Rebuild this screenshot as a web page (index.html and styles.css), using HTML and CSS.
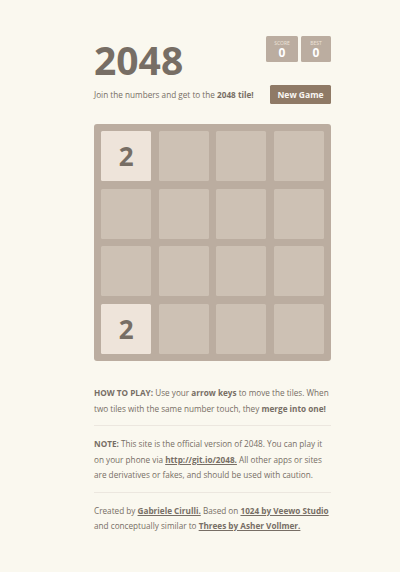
FILE: index.html
```html
<!DOCTYPE html>
<html>
<head>
<meta charset="utf-8">
<link rel="stylesheet" href="styles.css">
</head>
<body>
<div class="container">
  <div class="heading">
    <h1 class="title">2048</h1>
    <div class="scores">
      <div class="score-box"><span class="label">SCORE</span><span class="value">0</span></div>
      <div class="score-box best"><span class="label">BEST</span><span class="value">0</span></div>
    </div>
  </div>
  <div class="above-game">
    <p class="intro">Join the numbers and get to the <strong>2048 tile!</strong></p>
    <span class="restart">New Game</span>
  </div>
  <div class="board">
    <div class="cell tile-2">2</div><div class="cell"></div><div class="cell"></div><div class="cell"></div>
    <div class="cell"></div><div class="cell"></div><div class="cell"></div><div class="cell"></div>
    <div class="cell"></div><div class="cell"></div><div class="cell"></div><div class="cell"></div>
    <div class="cell tile-2">2</div><div class="cell"></div><div class="cell"></div><div class="cell"></div>
  </div>
  <p class="explanation"><strong>HOW TO PLAY:</strong> Use your <strong>arrow keys</strong> to move the tiles. When two tiles with the same number touch, they <strong>merge into one!</strong></p>
  <hr>
  <p class="note"><strong>NOTE:</strong> This site is the official version of 2048. You can play it on your phone via <a>http://git.io/2048.</a> All other apps or sites are derivatives or fakes, and should be used with caution.</p>
  <hr>
  <p class="credits">Created by <a>Gabriele Cirulli.</a> Based on <a>1024 by Veewo Studio</a> and conceptually similar to <a>Threes by Asher Vollmer.</a></p>
</div>
</body>
</html>
```
FILE: styles.css
```css
html, body {
  margin: 0;
  padding: 0;
  background: #faf8ef;
}
body {
  font-family: "Open Sans", "Noto Sans", sans-serif;
  color: #776e65;
  font-size: 8.2px;
}
.container {
  width: 237px;
  margin-left: 94px;
  padding-top: 36px;
}
.heading {
  display: flex;
  justify-content: space-between;
  align-items: flex-start;
}
.title {
  margin: 0;
  font-size: 39px;
  font-weight: 700;
  line-height: 47px;
  letter-spacing: 0;
}
.scores {
  display: flex;
  gap: 3px;
}
.score-box {
  background: #bbada0;
  width: 32px;
  height: 26px;
  border-radius: 1.5px;
  display: flex;
  flex-direction: column;
  align-items: center;
  color: #fff;
}
.score-box.best { width: 30px; }
.label {
  font-size: 5px;
  color: #eee4da;
  margin-top: 4px;
  line-height: 6px;
}
.value {
  font-size: 12px;
  font-weight: 700;
  line-height: 13px;
}
.above-game {
  display: flex;
  justify-content: space-between;
  align-items: center;
  margin-top: 2px;
}
.intro {
  margin: 0;
  line-height: 19px;
}
.restart {
  background: #8f7a66;
  color: #f9f6f2;
  font-weight: 700;
  width: 61px;
  height: 19px;
  line-height: 19px;
  text-align: center;
  border-radius: 1.5px;
  font-size: 8.5px;
}
.board {
  margin-top: 20px;
  width: 237px;
  height: 237px;
  box-sizing: border-box;
  padding: 7px;
  background: #bbada0;
  border-radius: 3px;
  display: grid;
  grid-template-columns: repeat(4, 1fr);
  grid-template-rows: repeat(4, 1fr);
  gap: 7.1px;
}
.cell {
  background: #cdc1b4;
  border-radius: 1.5px;
}
.tile-2 {
  background: #eee4da;
  color: #776e65;
  font-size: 26px;
  font-weight: 700;
  display: flex;
  align-items: center;
  justify-content: center;
}
p.explanation, p.note, p.credits {
  margin: 0;
  line-height: 15.5px;
}
p.explanation { margin-top: 24px; }
hr {
  border: none;
  border-bottom: 1px solid #ece7df;
  margin: 9px 0 10px;
}
a {
  color: #776e65;
  font-weight: 700;
  text-decoration: underline;
}
```
